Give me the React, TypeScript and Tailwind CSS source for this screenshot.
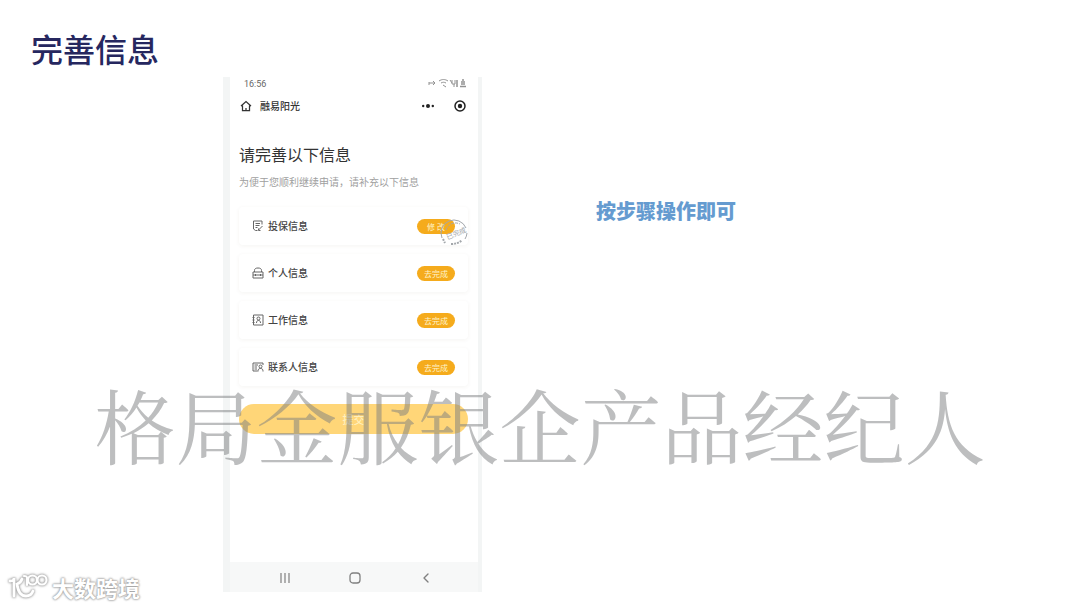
import type { ReactNode } from 'react';
import { ChevronLeft } from 'lucide-react';

interface Step {
  id: string;
  label: string;
  action: string;
  icon: ReactNode;
  done?: boolean;
}

const iconProps = {
  viewBox: '0 0 24 24',
  fill: 'none',
  stroke: 'currentColor',
  strokeWidth: 2,
  className: 'w-3 h-3 shrink-0 text-[#666666]',
  'aria-hidden': true,
};

const steps: Step[] = [
  {
    id: 'policy',
    label: '投保信息',
    action: '修 改',
    done: true,
    icon: (
      <svg {...iconProps}>
        <path d="M20 9V2H3v16l4 3h4M7 7h9M7 11h8M7 15h4M13 20l8-8M13 17v4h4" />
      </svg>
    ),
  },
  {
    id: 'personal',
    label: '个人信息',
    action: '去完成',
    icon: (
      <svg {...iconProps}>
        <path d="M5 10V7c0-4 3-5 7-5s7 1 7 5v3M2 10h20v12H2zM2 16h5M17 16h5M7 14v4M17 14v4M7 16h10" />
      </svg>
    ),
  },
  {
    id: 'work',
    label: '工作信息',
    action: '去完成',
    icon: (
      <svg {...iconProps}>
        <path d="M3 2h19v20H3zM1 7h4M1 12h4M1 17h4M9 18c0-3 1-5 4-5s4 2 4 5" />
        <circle cx="13" cy="9" r="3" />
      </svg>
    ),
  },
  {
    id: 'contact',
    label: '联系人信息',
    action: '去完成',
    icon: (
      <svg {...iconProps}>
        <path d="M11 20H2V4h20v4M5 8h7M5 12h5M5 16h5M12 21c0-4 1-6 5-6s5 2 5 6" />
        <circle cx="17" cy="11" r="3" />
      </svg>
    ),
  },
];

function Stamp() {
  return (
    <svg
      viewBox="0 0 28 26"
      className="absolute right-0 bottom-0 w-7 h-[26px] text-[#a3a7ab]"
      fill="none"
      stroke="currentColor"
      aria-hidden="true"
    >
      <path d="M2 19A13 13 0 0 1 26 9" />
      <path d="M27 14A13 13 0 0 1 25 20" />
      <path d="M6 11A10 10 0 0 1 20 5" strokeDasharray="3 1" />
      <path d="M3 20L5 24M11 25Q18 25 22 21" strokeWidth="2" strokeDasharray="2 1" />
      <text x="16" y="17" fontSize="7" textAnchor="middle" transform="rotate(-22 16 14)" fill="currentColor" stroke="none">
        已完成
      </text>
    </svg>
  );
}

function StepCard({ step }: { step: Step }) {
  return (
    <li className="relative flex items-center h-[38px] px-[13px] rounded bg-white shadow-[0_1px_4px_rgba(90,60,40,0.06)]">
      {step.icon}
      <span className="ml-1 flex-1 text-[10px] leading-4 font-medium text-[#444444]">{step.label}</span>
      <button type="button" className="w-[38px] h-[15px] rounded-full bg-[#f5ab1c] text-[8px] leading-[15px] text-[#fff3c9]">
        {step.action}
      </button>
      {step.done && <Stamp />}
    </li>
  );
}

function StatusBar() {
  return (
    <div className="flex items-center justify-between h-[14px] pl-[14px] pr-3">
      <span className="font-['Roboto','Noto_Sans_CJK_SC',sans-serif] text-[9px] leading-[14px] text-[#666666]">16:56</span>
      <svg viewBox="0 0 38 10" className="w-[38px] h-[10px] text-[#929292]" fill="none" stroke="currentColor" aria-hidden="true">
        <path d="M1 4h6M1 3v3M5 2l2 2-2 2" />
        <path d="M11 2c3-2 6-2 9 0M13 4c2-1 3-1 5 0M15 6l3 2" />
        <path d="M22 1l2 3M24 1v4h3V1M26 5v3" />
        <path d="M29 1v7" strokeWidth="1.5" />
        <path d="M34 1h2M33 3h4M33 5h4M32 7.500h6" strokeWidth="1.5" />
      </svg>
    </div>
  );
}

function AppBar() {
  return (
    <div className="flex items-center h-[30px] pl-[10px] pr-3">
      <button type="button" aria-label="首页" className="text-[#333333]">
        <svg viewBox="0 0 24 24" className="w-3 h-3" fill="none" stroke="currentColor" strokeWidth="2.5" aria-hidden="true">
          <path d="M2 12L12 3l10 9M5 11v10h14V11M12 16v5" />
        </svg>
      </button>
      <span className="ml-2 flex-1 text-[10px] leading-4 font-medium text-[#333333]">融易阳光</span>
      <button type="button" aria-label="更多" className="text-[#222222]">
        <svg viewBox="0 0 12 12" className="w-3 h-3" fill="currentColor" aria-hidden="true">
          <circle cx="1.200" cy="6" r="1.200" />
          <circle cx="6" cy="6" r="2" />
          <circle cx="10.800" cy="6" r="1.200" />
        </svg>
      </button>
      <button type="button" aria-label="关闭" className="ml-5 text-[#222222]">
        <svg viewBox="0 0 12 12" className="w-3 h-3" fill="none" stroke="currentColor" strokeWidth="1.500" aria-hidden="true">
          <circle cx="6" cy="6" r="5" />
          <circle cx="6" cy="6" r="2.200" fill="currentColor" stroke="none" />
        </svg>
      </button>
    </div>
  );
}

function SystemNav() {
  return (
    <nav className="flex items-center justify-between h-[30px] pt-0.5 pl-12 pr-11 bg-[#f7f8f8] text-[#808080]">
      <button type="button" aria-label="最近任务">
        <svg viewBox="0 0 14 14" className="w-[14px] h-[14px]" stroke="currentColor" strokeWidth="1.200" aria-hidden="true">
          <path d="M3 2v10M7 2v10M11 2v10" />
        </svg>
      </button>
      <button type="button" aria-label="主屏幕">
        <svg viewBox="0 0 14 14" className="w-[14px] h-[14px]" fill="none" stroke="currentColor" strokeWidth="1.300" aria-hidden="true">
          <rect x="2" y="2" width="10" height="10" rx="3" />
        </svg>
      </button>
      <button type="button" aria-label="返回">
        <ChevronLeft className="w-4 h-4" strokeWidth={2} />
      </button>
    </nav>
  );
}

function Phone() {
  return (
    <section className="border-l-[7px] border-r-4 border-[#f3f5f5] bg-white">
      <StatusBar />
      <AppBar />
      <div className="pl-[9px] pr-[10px] pt-[21px] pb-32">
        <h2 className="text-base leading-6 text-[#333333]">请完善以下信息</h2>
        <p className="mt-2 text-[10px] leading-4 text-[#a0a0a0] whitespace-nowrap">为便于您顺利继续申请，请补充以下信息</p>
        <ul className="mt-[17px] flex flex-col gap-[9px]">
          {steps.map((step) => (
            <StepCard key={step.id} step={step} />
          ))}
        </ul>
        <button type="button" className="mt-[18px] block w-full h-[30px] rounded-full bg-[#ffd678] text-[11px] leading-[30px] font-medium text-[#fff0bd]">
          提交
        </button>
      </div>
      <SystemNav />
    </section>
  );
}

function Brand() {
  return (
    <div className="absolute left-2 bottom-1 flex items-center gap-1 text-white">
      <svg
        viewBox="0 0 40 32"
        className="w-10 h-8 [filter:drop-shadow(0_0_1px_#999999)_drop-shadow(0_0_1px_#bbbbbb)]"
        fill="none"
        stroke="currentColor"
        strokeWidth="2.800"
        strokeLinecap="round"
        aria-hidden="true"
      >
        <path d="M2 10c3 0 4-1 4-3v18" />
        <path d="M14 8c-1 3-2 4-5 5 1 8 4 12 9 12 4 0 6-2 7-5" />
        <g strokeWidth="2.200">
          <path d="M16 5c2 0 3 0 3 2v7" />
          <circle cx="24.500" cy="9" r="4.500" />
          <circle cx="34" cy="9" r="4.500" />
        </g>
      </svg>
      <span className="text-[22px] leading-8 font-bold [text-shadow:0_0_2px_#999999,0_0_2px_#aaaaaa,0_0_3px_#bbbbbb]">大数跨境</span>
    </div>
  );
}

export default function App() {
  return (
    <div className="relative min-h-screen overflow-hidden bg-white font-['Noto_Sans_CJK_SC',sans-serif]">
      <header className="px-[31px] pt-[30px] pb-[11px]">
        <h1 className="text-[32px] leading-9 font-medium text-[#26275f]">完善信息</h1>
      </header>
      <main className="grid grid-cols-[223fr_259fr_598fr]">
        <div className="col-start-2">
          <Phone />
        </div>
        <p className="pl-[114px] pt-[122px] text-xl leading-6 font-black text-[#659bd0]">按步骤操作即可</p>
      </main>
      <div className="pointer-events-none absolute inset-x-0 top-[375px] text-center font-['Noto_Serif_CJK_SC','Noto_Sans_CJK_SC',sans-serif] text-[81px] leading-[96px] font-normal whitespace-nowrap text-[#7b7e80]/50">
        格局金服银企产品经纪人
      </div>
      <Brand />
    </div>
  );
}
